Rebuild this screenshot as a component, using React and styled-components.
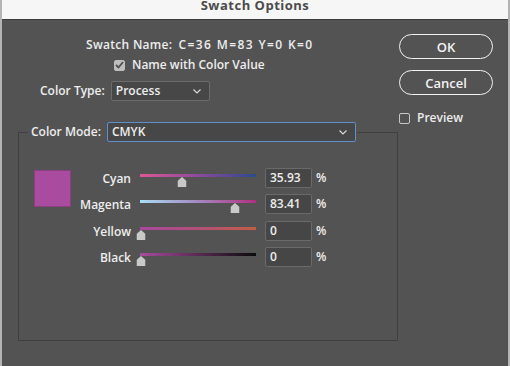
import styled, { createGlobalStyle } from "styled-components";

const GlobalStyle = createGlobalStyle`
  html, body {
    margin: 0;
    padding: 0;
    background: #535353;
  }
  * {
    box-sizing: border-box;
  }
`;

const Window = styled.div`
  width: 510px;
  height: 366px;
  overflow: hidden;
  background: #535353;
  font-family: "Open Sans", "Liberation Sans", sans-serif;
  font-size: 12px;
  color: #ededed;
  border-left: 2px solid #b4b4b4;
  border-right: 2px solid #b4b4b4;
  display: flex;
  flex-direction: column;
`;

const TitleBar = styled.div`
  height: 20px;
  flex: none;
  background: #f6f6f6;
  border-bottom: 1px solid #3c3c3c;
  margin: 0 -2px;
  display: flex;
  justify-content: center;
  align-items: flex-start;
`;

const Title = styled.div`
  font-size: 13px;
  font-weight: 700;
  line-height: 12px;
  margin-top: -1px;
  letter-spacing: 0.5px;
  color: #4b4b4b;
`;

const Body = styled.div`
  flex: 1;
  display: flex;
`;

const Main = styled.div`
  width: 396px;
  display: flex;
  flex-direction: column;
`;

const Side = styled.div`
  flex: 1;
  padding: 14px 0 0 1px;
  display: flex;
  flex-direction: column;
  align-items: flex-start;
`;

const Text = styled.span`
  font-weight: 600;
  line-height: 16px;
  white-space: nowrap;
  letter-spacing: ${(p) => p.$spacing ?? 0}px;
`;

const NameRow = styled.div`
  margin: 17px 0 0 84px;
  height: 16px;
  display: flex;
  gap: 6px;
`;

const CheckRow = styled.label`
  margin: ${(p) => p.$top ?? 4}px 0 0 ${(p) => p.$left ?? 112}px;
  height: 16px;
  display: flex;
  align-items: center;
  gap: 7px;
`;

const Box = styled.span`
  width: 11px;
  height: 11px;
  border-radius: 2px;
  flex: none;
  display: flex;
  align-items: center;
  justify-content: center;
  background: ${(p) => (p.$checked ? "#bdbdbd" : "transparent")};
  border: 1px solid ${(p) => (p.$checked ? "#bdbdbd" : "#c8c8c8")};
`;

const TypeRow = styled.div`
  margin: 8px 0 0 38px;
  display: flex;
  align-items: center;
  gap: 6px;
`;

const Select = styled.div`
  width: ${(p) => p.$width}px;
  height: 20px;
  padding: 0 8px 0 4px;
  background: #474747;
  border: 1px solid ${(p) => (p.$focus ? "#5c8fcb" : "#6c6c6c")};
  border-radius: 2px;
  display: flex;
  align-items: center;
  justify-content: space-between;
`;

const Group = styled.fieldset`
  margin: 21px 0 0 16px;
  width: 380px;
  height: 219px;
  padding: 26px 0 0 15px;
  border: 1px solid #3f3f3f;
  border-radius: 1px;
  min-width: 0;
`;

const Legend = styled.legend`
  margin-left: -6px;
  padding: 0 1px 0 3px;
`;

const LegendInner = styled.div`
  display: flex;
  align-items: center;
  gap: 6px;
`;

const Mixer = styled.div`
  display: grid;
  grid-template-columns: 37px 51px 116px auto;
  grid-auto-rows: 20px;
  column-gap: 9px;
  row-gap: 6.3px;
`;

const Swatch = styled.div`
  grid-row: 1 / span 2;
  width: 37px;
  height: 37px;
  margin-top: 2px;
  background: ${(p) => p.$color};
  border: 1px solid #8a3f80;
`;

const Label = styled.div`
  grid-column: 2;
  text-align: right;
  font-weight: 600;
  font-size: 12px;
  line-height: 20px;
  margin-top: 1px;
`;

const Slider = styled.div`
  position: relative;
  height: 20px;
`;

const Track = styled.div`
  margin-top: 6px;
  height: 3px;
  background: linear-gradient(to right, ${(p) => p.$from}, ${(p) => p.$mid}, ${(p) => p.$to});
`;

const Thumb = styled.svg`
  position: absolute;
  top: 9px;
  transform: translateX(-50%);
`;

const ValueCell = styled.div`
  display: flex;
  align-items: center;
  gap: 4px;
`;

const Input = styled.div`
  width: 47px;
  height: 20px;
  padding-left: 4px;
  background: #464646;
  border: 1px solid #6a6a6a;
  border-radius: 2px;
  font-weight: 600;
  line-height: 18px;
`;

const Pill = styled.button`
  width: 94px;
  height: 25px;
  margin-bottom: ${(p) => p.$gap}px;
  border-radius: 13px;
  border: 1.5px solid #f2f2f2;
  background: transparent;
  color: #f2f2f2;
  font-family: "Open Sans", "Liberation Sans", sans-serif;
  font-size: 13px;
  font-weight: 600;
  padding: 0;
`;

const Chevron = () => (
  <svg width="8" height="5" viewBox="0 0 8 5">
    <polyline points="0.5,0.5 4,4 7.5,0.5" fill="none" stroke="#d8d8d8" strokeWidth="1.2" />
  </svg>
);

const Check = () => (
  <svg width="9" height="8" viewBox="0 0 9 8">
    <polyline points="1,4 3.5,6.5 8,1" fill="none" stroke="#4f4f4f" strokeWidth="1.8" />
  </svg>
);

const inks = [
  { name: "Cyan", value: "35.93", pct: 0.3593, from: "#de5795", mid: "#8c4b9c", to: "#2c4a8d" },
  { name: "Magenta", value: "83.41", pct: 0.8341, from: "#a9ddf6", mid: "#a488c0", to: "#b02f80" },
  { name: "Yellow", value: "0", pct: 0, from: "#a8479e", mid: "#b24f78", to: "#c35d46" },
  { name: "Black", value: "0", pct: 0, from: "#a84c9e", mid: "#5a2a55", to: "#0b0b0b" },
];

function InkRow({ ink }) {
  return (
    <>
      <Label>{ink.name}</Label>
      <Slider>
        <Track $from={ink.from} $mid={ink.mid} $to={ink.to} />
        <Thumb width="9" height="10" viewBox="0 0 9 10" style={{ left: ink.pct * 113 + 1 }}>
          <polygon points="4.5,0 9,4 9,10 0,10 0,4" fill="#c9c9c9" />
        </Thumb>
      </Slider>
      <ValueCell>
        <Input>{ink.value}</Input>
        <Text>%</Text>
      </ValueCell>
    </>
  );
}

export default function App() {
  return (
    <>
      <GlobalStyle />
      <Window>
        <TitleBar>
          <Title>Swatch Options</Title>
        </TitleBar>
        <Body>
          <Main>
            <NameRow>
              <Text $spacing={0.3}>Swatch Name:</Text>
              <Text $spacing={1.4}>C=36 M=83 Y=0 K=0</Text>
            </NameRow>
            <CheckRow>
              <Box $checked>
                <Check />
              </Box>
              <Text>Name with Color Value</Text>
            </CheckRow>
            <TypeRow>
              <Text>Color Type:</Text>
              <Select $width={99}>
                <Text>Process</Text>
                <Chevron />
              </Select>
            </TypeRow>
            <Group>
              <Legend>
                <LegendInner>
                  <Text>Color Mode:</Text>
                  <Select $width={249} $focus>
                    <Text>CMYK</Text>
                    <Chevron />
                  </Select>
                </LegendInner>
              </Legend>
              <Mixer>
                <Swatch $color="#a94b9e" />
                {inks.map((ink) => (
                  <InkRow key={ink.name} ink={ink} />
                ))}
              </Mixer>
            </Group>
          </Main>
          <Side>
            <Pill $gap={11}>OK</Pill>
            <Pill $gap={15}>Cancel</Pill>
            <CheckRow $top={0} $left={0}>
              <Box />
              <Text>Preview</Text>
            </CheckRow>
          </Side>
        </Body>
      </Window>
    </>
  );
}
